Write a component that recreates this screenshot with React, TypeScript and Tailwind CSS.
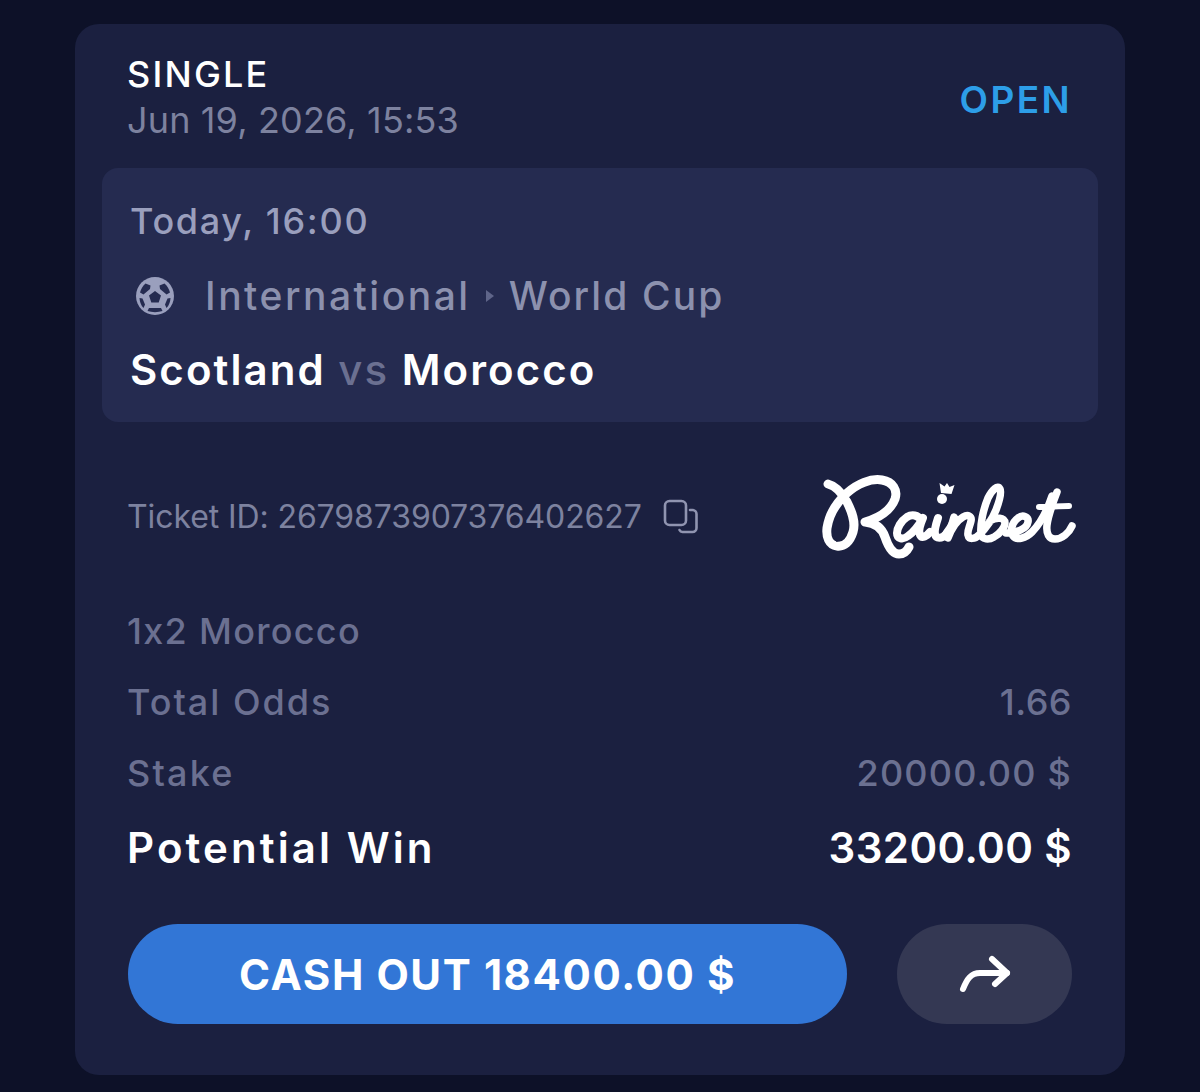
function Ball() {
  return (
    <svg width="40" height="40" viewBox="0 0 40 40" className="shrink-0">
      <circle cx="20" cy="20" r="19" fill="#9a9fbd" />
      <path d="M10.500 7.500l5 2-.5 3.500-6.500 5.500-3.500-2c1-3.500 2.500-6.500 5.500-9z" fill="#252b50" />
      <path d="M24.500 9.500l5-2c3 2.500 4.500 5.500 5.500 9l-3.500 2-6.500-5.500z" fill="#252b50" />
      <path d="M14 19.500l6-4.500 6 4.500-2.300 7h-7.400z" fill="#252b50" />
      <path d="M4.500 22l3 .5 2.500 6-1.500 3.500c-2.500-2.500-3.700-6-4-10z" fill="#252b50" />
      <path d="M35.500 22l-3 .5-2.500 6 1.500 3.500c2.500-2.500 3.700-6 4-10z" fill="#252b50" />
      <path d="M14 32l12 0 1.500 3c-4.500 1.500-10.500 1.500-15 0z" fill="#252b50" />
    </svg>
  );
}

function CopyIcon() {
  return (
    <svg width="36" height="36" viewBox="0 0 36 36" fill="none" stroke="#9094b0" strokeWidth="2.600" strokeLinecap="round" className="ml-[21px] shrink-0">
      <rect x="2" y="2" width="21" height="24" rx="4.500" />
      <path d="M27 11h2.500a4 4 0 0 1 4 4v14a4 4 0 0 1-4 4h-10a3.500 3.500 0 0 1-3-2" />
    </svg>
  );
}

// traced against the wordmark, coordinates are offset by the viewBox
function RainbetLogo() {
  return (
    <svg width="256" height="92" viewBox="20 20 256 92" fill="none" stroke="#fff" strokeLinecap="round" strokeLinejoin="round" className="-mr-1">
      {/* R */}
      <path d="M28 33c8 2 14 9 19 18 5 10 9 20 6 30-3 10-9 15-16 14-8-1-11-9-10-18 2-13 10-26 20-35 10-9 24-15 35-13 11 2 16 10 13 19-4 11-16 19-30 23 11 1 17 6 20 15 3 9 7 17 14 17 5 0 8-3 10-7" strokeWidth="9" />
      <path d="M34 76c-2 6-1 11 3 14" stroke="#1b2040" strokeWidth="2" />
      {/* a */}
      <path d="M121 69c-3-5-9-6-14-3-6 4-10 11-10 16 0 6 6 7 11 3 6-4 11-11 15-18-3 7-5 13-3 17 2 4 7 1 10-3" strokeWidth="8" />
      {/* i */}
      <path d="M138 67c-2 6-4 12-3 16 1 5 7 5 11 0 3-4 5-7 7-11" strokeWidth="8" />
      <circle cx="142" cy="48" r="5" fill="#fff" stroke="none" />
      <path d="M141 42l-1.500-10 5 3.500 2.500-3.500 2.500 4 5-2-3 9z" fill="#fff" stroke="none" />
      {/* n */}
      <path d="M154 66c-2 7-4 14-6 21 3-8 8-17 15-21 5-3 9-1 8 4-1 5-4 10-3 14 1 5 7 4 11 0 7-7 13-15 17-25 3-8 6-17 4-21-2-5-8 1-12 9-5 12-8 27-7 36 1 6 8 6 13 3 6-3 11-10 11-14 0-6-9-6-15-2" strokeWidth="7.500" />
      {/* e */}
      <path d="M206 82c10 0 21-4 22-11 1-5-5-8-10-4-7 5-8 14-5 18 4 5 13 2 19-4 8-8 14-18 20-36" strokeWidth="7.500" />
      {/* t */}
      <path d="M257 41c-5 13-9 25-10 33-1 9 2 14 8 14 7 0 14-6 17-13" strokeWidth="7.500" />
      <path d="M239 56c10 0 20-1 30-1" strokeWidth="6" />
    </svg>
  );
}

function Row({ label, value, labelTrack, valueTrack }: { label: string; value?: string; labelTrack: string; valueTrack?: string }) {
  return (
    <div className="flex items-center justify-between h-[71px] text-[36px] font-medium text-[#6b7091]">
      <span className={labelTrack}>{label}</span>
      {value && <span className={valueTrack}>{value}</span>}
    </div>
  );
}

export default function App() {
  return (
    <div
      className="h-[1092px] bg-[#0d1128] pt-6 px-[75px] overflow-hidden"
      style={{ fontFamily: "Inter, 'Noto Sans', sans-serif" }}
    >
      <div className="h-[1051px] rounded-3xl bg-[#1b2040] px-[27px] pt-[21px]">
        {/* Header */}
        <div className="flex items-center justify-between pl-[25px] pr-[26px] h-[123px] pb-[13px]">
          <div className="flex flex-col pb-[6px]">
            <span className="text-[36px] leading-[46px] font-medium text-white tracking-[2.200px]">SINGLE</span>
            <span className="text-[36px] leading-[46px] text-[#7d829f] tracking-[0.150px]">Jun 19, 2026, 15:53</span>
          </div>
          <span className="text-[37px] font-semibold text-[#2d9ee8] tracking-[2.400px]">OPEN</span>
        </div>

        {/* Match panel */}
        <div className="h-[254px] rounded-2xl bg-[#252b50] pl-7 pt-[30px]">
          <div className="text-[36px] leading-[46px] font-medium text-[#9a9fbd] tracking-[1.700px]">Today, 16:00</div>
          <div className="flex items-center h-[46px] mt-[29px] pl-[5px] text-[39px] font-medium text-[#8c91ae]">
            <Ball />
            <span className="ml-[30px] tracking-[2.500px]">International</span>
            <span className="mx-[15px] h-0 w-0 border-y-[6px] border-l-[8px] border-y-transparent border-l-[#5f6589]" />
            <span className="tracking-[2.100px]">World Cup</span>
          </div>
          <div className="mt-[26px] text-[42px] leading-[50px] font-semibold text-white tracking-[2.050px]">
            Scotland <span className="font-medium text-[#6b7091]">vs</span> Morocco
          </div>
        </div>

        <div className="pl-[25px] pr-[26px]">
          {/* Ticket row */}
          <div className="flex items-center justify-between mt-[48px] h-[94px]">
            <div className="flex items-center text-[32px] text-[#7d829f] tracking-[-0.100px]">
              <span>Ticket ID: 2679873907376402627</span>
              <CopyIcon />
            </div>
            <RainbetLogo />
          </div>

          {/* Details */}
          <div className="mt-[31px]">
            <Row label="1x2 Morocco" labelTrack="tracking-[1.300px]" />
            <Row label="Total Odds" value="1.66" labelTrack="tracking-[2px]" valueTrack="tracking-[0.500px]" />
            <Row label="Stake" value="20000.00 $" labelTrack="tracking-[2.200px]" valueTrack="tracking-[1.200px]" />
            <div className="flex items-center justify-between h-[79px] text-[42px] font-semibold text-white">
              <span className="tracking-[3.100px]">Potential Win</span>
              <span className="tracking-[0.400px]">33200.00 $</span>
            </div>
          </div>

          {/* Actions */}
          <div className="flex justify-between mt-[37px] pl-px">
            <button className="w-[719px] h-[100px] rounded-full bg-[#3276d6] text-[42px] font-bold text-white tracking-[1.600px]">
              CASH OUT 18400.00 $
            </button>
            <button className="w-[175px] h-[100px] rounded-full bg-[#343853] flex items-center justify-center">
              <svg width="56" height="40" viewBox="0 0 56 40" fill="none" stroke="#fff" strokeWidth="6" strokeLinecap="round" strokeLinejoin="round">
                <path d="M6 35c4-10 8-16 17-16h27" />
                <path d="M35 5l15 14-12 11" />
              </svg>
            </button>
          </div>
        </div>
      </div>
    </div>
  );
}
